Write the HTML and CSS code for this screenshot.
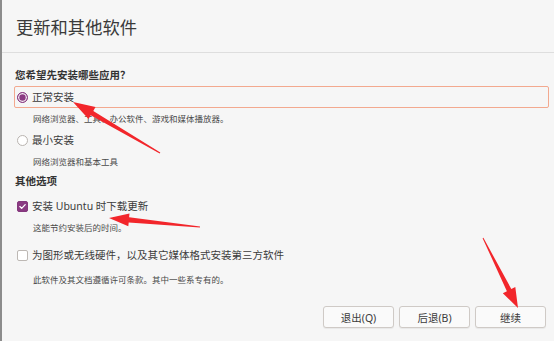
FILE: index.html
```html
<!DOCTYPE html>
<html lang="zh-CN">
<head>
    <meta charset="UTF-8">
    <title>更新和其他软件</title>
    <link rel="stylesheet" href="styles.css">
</head>
<body>
    <div class="window">
        <!-- Cabecera -->
        <div class="header">
            <span class="header-title">更新和其他软件</span>
        </div>

        <div class="content">
            <div class="section-title first">您希望先安装哪些应用？</div>

            <div class="option focused">
                <span class="radio checked"></span>
                <span class="option-label">正常安装</span>
            </div>
            <div class="option-desc desc-a">网络浏览器、工具、办公软件、游戏和媒体播放器。</div>

            <div class="option option-b">
                <span class="radio"></span>
                <span class="option-label">最小安装</span>
            </div>
            <div class="option-desc desc-a">网络浏览器和基本工具</div>

            <div class="section-title second">其他选项</div>

            <div class="option option-c">
                <span class="check checked">
                    <svg width="11" height="11" viewBox="0 0 11 11"><path d="M2.3 5.6 L4.5 7.8 L8.8 3.2" fill="none" stroke="#fff" stroke-width="1.6" stroke-linecap="round" stroke-linejoin="round"/></svg>
                </span>
                <span class="option-label">安装 Ubuntu 时下载更新</span>
            </div>
            <div class="option-desc desc-a">这能节约安装后的时间。</div>

            <div class="option option-d">
                <span class="check"></span>
                <span class="option-label">为图形或无线硬件，以及其它媒体格式安装第三方软件</span>
            </div>
            <div class="option-desc desc-d">此软件及其文档遵循许可条款。其中一些系专有的。</div>
        </div>

        <div class="footer">
            <button class="btn">退出(Q)</button>
            <button class="btn">后退(B)</button>
            <button class="btn">继续</button>
        </div>

        <!-- Flechas de anotación -->
        <svg class="marks" width="554" height="341" viewBox="0 0 554 341">
            <polygon fill="#f2262b" points="73,102 95.5,107.1 93.3,110.9 160.3,152.6 159.7,153.4 90.7,115.3 88.5,119.1"/>
            <polygon fill="#f2262b" points="109,218 129.5,213.5 129.1,217.3 200.1,226.5 199.9,227.5 128.7,222.6 128.3,226.3"/>
            <polygon fill="#f2262b" points="518,308 515.3,287 511.3,289 483.4,237.8 482.6,238.2 506.9,291.2 502.8,293.2"/>
        </svg>
    </div>
</body>
</html>
```

FILE: styles.css
```css
body {
    margin: 0;
    background: #f6f6f6;
    font-family: "Noto Sans", "Noto Sans CJK SC", sans-serif;
    color: #3c3c3c;
}

.window {
    position: relative;
    width: 554px;
    height: 341px;
    box-sizing: border-box;
    border-left: 2px solid #8c8c8c;
    background: #f6f6f6;
    overflow: hidden;
}

.header {
    height: 53px;
    border-bottom: 1px solid #dedede;
    display: flex;
    align-items: center;
    padding-left: 14px;
    padding-top: 1px;
    box-sizing: border-box;
}

.header-title {
    font-size: 17.3px;
    color: #3a3a3a;
}

.content {
    padding: 0 5px 0 12px;
}

.section-title {
    font-size: 10.5px;
    font-weight: bold;
    line-height: 16px;
    color: #333;
    padding-left: 1px;
}

.section-title.first {
    margin-top: 14px;
}

.section-title.second {
    margin-top: 4px;
}

.option {
    height: 22px;
    box-sizing: border-box;
    border: 1px solid transparent;
    border-radius: 2px;
    display: flex;
    align-items: center;
    gap: 4px;
    padding-left: 2px;
    margin-top: 3px;
}

.option.focused {
    border-color: #f3a98f;
}

.option-c {
    margin-top: 6px;
}

.option-d {
    margin-top: 9px;
}

.option-label {
    font-size: 10.5px;
    line-height: 14px;
}

.radio {
    width: 11px;
    height: 11px;
    box-sizing: border-box;
    border: 1px solid #b9b4b0;
    border-radius: 50%;
    background: #fff;
    position: relative;
}

.radio.checked {
    border: 1.5px solid #8a3a82;
    background: #8a3a82;
    box-shadow: inset 0 0 0 1.3px #f4eef3;
}

.radio.checked::after {
    content: '';
    position: absolute;
    left: 2.2px;
    top: 2.2px;
    width: 3.6px;
    height: 3.6px;
    border-radius: 50%;
    background: #8a3a82;
}

.check {
    width: 11px;
    height: 11px;
    box-sizing: border-box;
    border: 1px solid #bdb8b4;
    border-radius: 2px;
    background: #fff;
    display: flex;
    align-items: center;
    justify-content: center;
}

.check.checked {
    border-color: #84387d;
    background: #8a3a82;
}

.option-desc {
    font-size: 8.5px;
    line-height: 14px;
    color: #4a4a4a;
    padding-left: 19px;
}

.desc-a {
    margin-top: 4px;
}

.desc-d {
    margin-top: 7px;
}

.footer {
    display: flex;
    justify-content: flex-end;
    gap: 5px;
    padding-right: 8px;
    margin-top: 19px;
}

.btn {
    width: 71px;
    height: 22px;
    border: 1px solid #cfcac6;
    border-radius: 3px;
    background: #fafafa;
    box-shadow: 0 1px 1px rgba(0, 0, 0, 0.06);
    font-family: "Noto Sans", "Noto Sans CJK SC", sans-serif;
    font-size: 10.5px;
    color: #3c3c3c;
    padding: 0;
}

.marks {
    position: absolute;
    left: -2px;
    top: 0;
    pointer-events: none;
}
```
